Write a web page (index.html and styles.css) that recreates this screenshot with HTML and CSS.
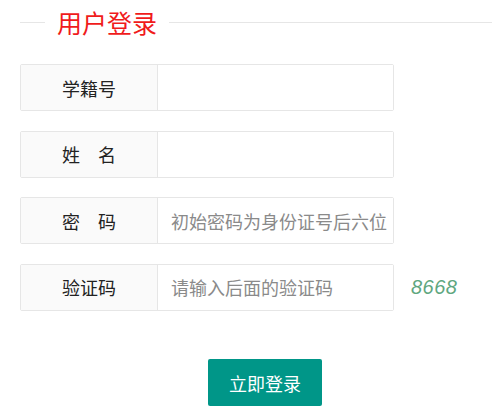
FILE: index.html
```html
<!DOCTYPE html>
<html lang="zh-CN">
<head>
<meta charset="utf-8">
<title>用户登录</title>
<link rel="stylesheet" href="styles.css">
</head>
<body>
<div class="page">
  <div class="title-bar">
    <span class="line line-short"></span>
    <h1 class="title">用户登录</h1>
    <span class="line line-long"></span>
  </div>
  <form class="form">
    <div class="row">
      <div class="field">
        <label class="label">学籍号</label>
        <input class="input" type="text">
      </div>
    </div>
    <div class="row">
      <div class="field">
        <label class="label">姓　名</label>
        <input class="input" type="text">
      </div>
    </div>
    <div class="row">
      <div class="field">
        <label class="label">密　码</label>
        <input class="input" type="password" placeholder="初始密码为身份证号后六位">
      </div>
    </div>
    <div class="row">
      <div class="field">
        <label class="label">验证码</label>
        <input class="input" type="text" placeholder="请输入后面的验证码">
      </div>
      <span class="captcha">8668</span>
    </div>
    <div class="actions">
      <button class="btn" type="button">立即登录</button>
    </div>
  </form>
</div>
</body>
</html>
```

FILE: styles.css
```css
html, body {
  margin: 0;
  padding: 0;
  background: #fff;
}
body {
  font-family: "Noto Sans CJK SC", "Noto Sans", "Liberation Sans", sans-serif;
  color: #333;
}
.page {
  padding: 0 0 0 20px;
}
.title-bar {
  display: flex;
  align-items: center;
  height: 44px;
}
.line {
  height: 1px;
  background: #e6e6e6;
}
.line-short {
  width: 25px;
}
.line-long {
  flex: 1;
}
.title {
  margin: 0;
  padding: 0 12px;
  font-size: 25px;
  font-weight: normal;
  color: #f01b1b;
  line-height: 44px;
}
.form {
  margin-top: 20px;
}
.row {
  display: flex;
  align-items: center;
  margin-bottom: 19.5px;
}
.field {
  display: flex;
  width: 372px;
  height: 45px;
  border: 1px solid #e6e6e6;
  border-radius: 2px;
}
.label {
  width: 136px;
  flex: none;
  background: #fafafa;
  border-right: 1px solid #e6e6e6;
  display: flex;
  align-items: center;
  justify-content: center;
  font-size: 18px;
  color: #222;
}
.input {
  flex: 1;
  min-width: 0;
  border: none;
  outline: none;
  padding: 0 0 0 13px;
  margin: 0;
  font-family: inherit;
  font-size: 18px;
  color: #333;
  background: #fff;
}
.input::placeholder {
  color: #8a8a8a;
}
.captcha {
  margin-left: 17px;
  font-family: "Liberation Sans", Arial, sans-serif;
  font-style: italic;
  font-size: 20px;
  color: #5fa77f;
  letter-spacing: 0.5px;
}
.actions {
  padding: 29px 0 0 188px;
}
.btn {
  width: 114px;
  height: 47px;
  border: none;
  border-radius: 2px;
  background: #009688;
  color: #fff;
  font-family: inherit;
  font-size: 18px;
  padding: 0;
  cursor: pointer;
}
```
